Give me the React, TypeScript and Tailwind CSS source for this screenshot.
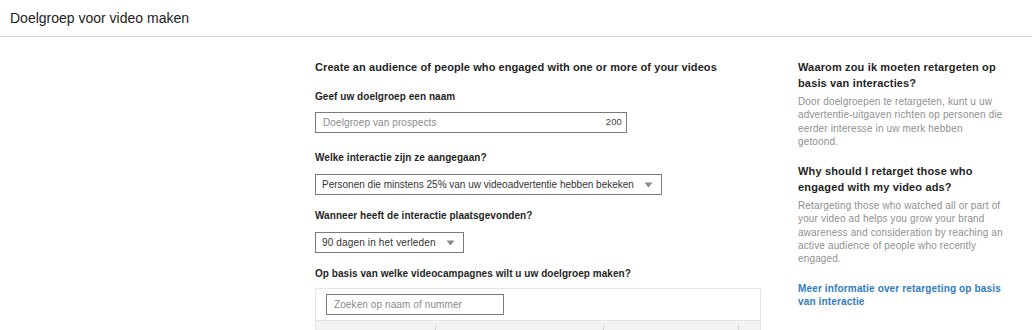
import React from 'react';

function Caret() {
  return (
    <svg width="9" height="6" viewBox="0 0 9 6" className="shrink-0">
      <path d="M0.5 0.5 L8.5 0.5 L4.5 5.5 Z" fill="#8a8a8a" />
    </svg>
  );
}

function Label({ children }: { children: React.ReactNode }) {
  return <div className="text-[10px] font-bold leading-[14px] text-[#1f1f1f] tracking-[0.05px]">{children}</div>;
}

export default function App() {
  return (
    <div className="w-[1032px] h-[330px] overflow-hidden bg-white font-['Liberation_Sans',Arial,sans-serif] text-[#222]">
      <div className="h-[37px] border-b border-[#d8d8d8] pl-[10px] pt-[10px] text-[14px] leading-[16px] text-[#222]">
        Doelgroep voor video maken
      </div>

      <div className="flex">
        <div className="w-[315px] shrink-0" />

        <div className="w-[446px] shrink-0 pt-[23px]">
          <div className="text-[11px] font-bold leading-[14px] text-[#1f1f1f] tracking-[0.08px]">
            Create an audience of people who engaged with one or more of your videos
          </div>

          <div className="mt-[16px]">
            <Label>Geef uw doelgroep een naam</Label>
            <div className="mt-[8px] w-[312px] h-[21px] border border-[#7a7a7a] flex items-center justify-between pl-[7px] pr-[4px] text-[10px] tracking-[0.1px]">
              <span className="text-[#8a8a8a]">Doelgroep van prospects</span>
              <span className="text-[#444] text-[9.5px]">200</span>
            </div>
          </div>

          <div className="mt-[18px]">
            <Label>Welke interactie zijn ze aangegaan?</Label>
            <div className="mt-[9px] w-[347px] h-[21px] border border-[#7a7a7a] flex items-center justify-between pl-[6px] pr-[8px] text-[10px] text-[#333] whitespace-nowrap">
              <span>Personen die minstens 25% van uw videoadvertentie hebben bekeken</span>
              <Caret />
            </div>
          </div>

          <div className="mt-[14px]">
            <Label>Wanneer heeft de interactie plaatsgevonden?</Label>
            <div className="mt-[9px] w-[149px] h-[21px] border border-[#7a7a7a] flex items-center justify-between pl-[6px] pr-[8px] text-[10px] tracking-[0.15px] text-[#333] whitespace-nowrap">
              <span>90 dagen in het verleden</span>
              <Caret />
            </div>
          </div>

          <div className="mt-[14px]">
            <Label>Op basis van welke videocampagnes wilt u uw doelgroep maken?</Label>
            <div className="mt-[7px] w-[446px] h-[60px] border border-[#e4e4e4] rounded-[2px]">
              <div className="h-[31px] pl-[10px] pt-[5px]">
                <div className="w-[178px] h-[21px] border border-[#7a7a7a] flex items-center px-[7px] text-[10px] tracking-[0.1px] text-[#8a8a8a]">
                  Zoeken op naam of nummer
                </div>
              </div>
              <div className="h-[28px] bg-[#f3f3f4] border-t border-[#e4e4e4] relative">
                <div className="absolute left-[119px] top-[4px] w-px h-[5px] bg-[#d2d2d2]" />
                <div className="absolute left-[287px] top-[4px] w-px h-[5px] bg-[#d2d2d2]" />
                <div className="absolute left-[422px] top-[4px] w-px h-[5px] bg-[#d2d2d2]" />
              </div>
            </div>
          </div>
        </div>

        <div className="w-[37px] shrink-0" />

        <div className="w-[230px] shrink-0 pt-[22px]">
          <div className="w-[200px] text-[11px] font-bold leading-[16px] text-[#1f1f1f] tracking-[0.15px]">
            Waarom zou ik moeten retargeten op basis van interacties?
          </div>
          <div className="mt-[4px] w-[216px] text-[10px] leading-[13.3px] text-[#8f8f8f] tracking-[0.15px]">
            Door doelgroepen te retargeten, kunt u uw advertentie-uitgaven richten op personen die eerder interesse in uw merk hebben<br />getoond.
          </div>
          <div className="mt-[15px] w-[200px] text-[11px] font-bold leading-[16px] text-[#1f1f1f] tracking-[0.15px]">
            Why should I retarget those who engaged with my video ads?
          </div>
          <div className="mt-[4px] w-[226px] text-[10px] leading-[13.3px] text-[#8f8f8f] tracking-[0.15px]">
            Retargeting those who watched all or part of<br />
            your video ad helps you grow your brand<br />
            awareness and consideration by reaching an<br />
            active audience of people who recently<br />
            engaged.
          </div>
          <div className="mt-[16px] w-[210px] text-[10px] font-bold leading-[13.3px] text-[#2f7bbf] tracking-[0.15px]">
            Meer informatie over retargeting op basis van interactie
          </div>
        </div>
      </div>
    </div>
  );
}
